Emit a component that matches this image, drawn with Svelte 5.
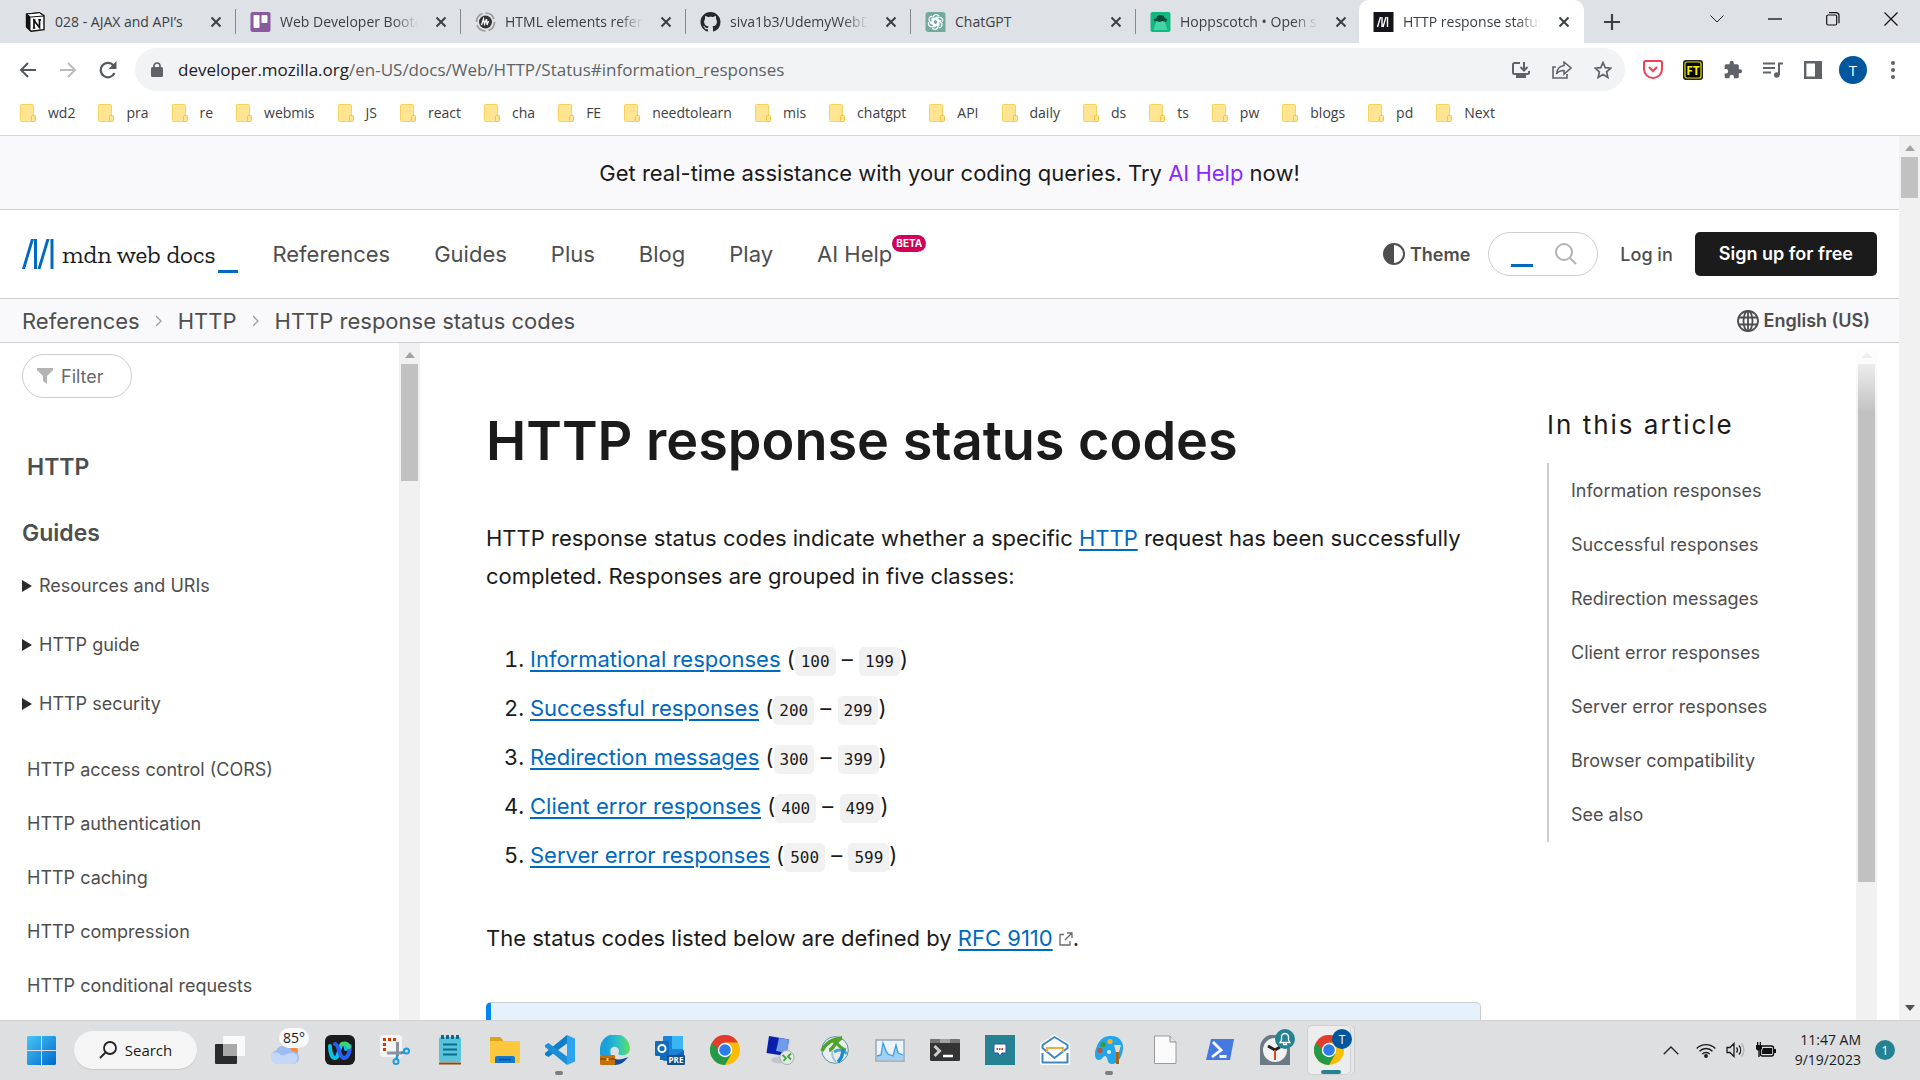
<script>
  const tabs = [
    { icon: 'notion', title: '028 - AJAX and API’s' },
    { icon: 'trello', title: 'Web Developer Bootcamp' },
    { icon: 'mdnring', title: 'HTML elements reference' },
    { icon: 'github', title: 'siva1b3/UdemyWebDev' },
    { icon: 'gpt', title: 'ChatGPT' },
    { icon: 'hopp', title: 'Hoppscotch • Open source' },
    { icon: 'mdn', title: 'HTTP response status codes', active: true }
  ];
  const bookmarks = ['wd2', 'pra', 're', 'webmis', 'JS', 'react', 'cha', 'FE', 'needtolearn', 'mis', 'chatgpt', 'API', 'daily', 'ds', 'ts', 'pw', 'blogs', 'pd', 'Next'];
  const menu = ['References', 'Guides', 'Plus', 'Blog', 'Play'];
  const groups = ['Resources and URIs', 'HTTP guide', 'HTTP security'];
  const pages = ['HTTP access control (CORS)', 'HTTP authentication', 'HTTP caching', 'HTTP compression', 'HTTP conditional requests'];
  const classes = [
    ['Informational responses', 100, 199],
    ['Successful responses', 200, 299],
    ['Redirection messages', 300, 399],
    ['Client error responses', 400, 499],
    ['Server error responses', 500, 599]
  ];
  const toc = ['Information responses', 'Successful responses', 'Redirection messages', 'Client error responses', 'Server error responses', 'Browser compatibility', 'See also'];
  const apps = ['Task view', 'Weather', 'Webex', 'Snipping Tool', 'Notepad', 'File Explorer', 'Visual Studio Code', 'Edge', 'Outlook', 'Chrome', 'Remote Desktop', 'AnyConnect', 'Performance Monitor', 'Terminal', 'Chat', 'Mail', 'Paint', 'Document', 'PowerShell', 'Clock', 'Chrome profile'];
  const running = ['Visual Studio Code', 'Paint'];
</script>

{#snippet cross()}
  <svg width="12" height="12" viewBox="0 0 12 12"><path d="M1.5 1.5l9 9M10.5 1.5l-9 9" stroke="#3c4043" stroke-width="2" fill="none" /></svg>
{/snippet}

{#snippet favicon(name)}
  <svg class="fav" width="21" height="20" viewBox="0 0 20 20">
    {#if name === 'notion'}
      <path d="M1 2.2L14 .8l4.5 2.8v14L5.500 19.300 1 15z" fill="#fff" stroke="#111" stroke-width="1.4" />
      <path d="M1 2l13-1.200L18.500 4 5 5z" fill="#fff" stroke="#111" />
      <path d="M5 5v14L1 15V2z" fill="#111" />
      <path d="M8.500 16V8.500l5.500 7V8M7.500 8.200h2.500M12.800 7.800h2.700M7.300 16h2.500" stroke="#111" stroke-width="1.700" fill="none" />
    {:else if name === 'trello'}
      <rect width="20" height="20" rx="2" fill="#8a5aa0" />
      <rect x="3" y="3" width="6" height="13" rx="1" fill="#fff" />
      <rect x="11" y="3" width="6" height="8" rx="1" fill="#fff" />
    {:else if name === 'mdnring'}
      <circle cx="10" cy="10" r="9" fill="none" stroke="#9b9b9b" stroke-width="1.700" stroke-dasharray="11 3" />
      <circle cx="10" cy="10" r="6.500" fill="#333" />
      <path d="M6 13l2-6 1 5 2-5 .5 6 1.500-4" stroke="#fff" stroke-width="1.300" fill="none" />
    {:else if name === 'github'}
      <path transform="scale(1.250)" fill="#24292e" d="M8 0C3.580 0 0 3.580 0 8c0 3.540 2.290 6.530 5.470 7.590.4.070.55-.17.55-.38 0-.19-.01-.82-.01-1.490-2.010.37-2.530-.49-2.690-.94-.09-.23-.48-.94-.82-1.130-.28-.15-.68-.52-.01-.53.63-.01 1.080.58 1.230.82.72 1.210 1.870.87 2.330.66.07-.52.28-.87.51-1.070-1.780-.2-3.640-.89-3.640-3.950 0-.87.31-1.590.82-2.150-.08-.2-.36-1.020.08-2.120 0 0 .67-.21 2.200.82.64-.18 1.320-.27 2-.27s1.360.09 2 .27c1.530-1.040 2.200-.82 2.200-.82.44 1.100.16 1.920.08 2.120.51.56.82 1.270.82 2.150 0 3.070-1.870 3.750-3.650 3.950.29.25.54.73.54 1.480 0 1.070-.01 1.930-.01 2.200 0 .21.15.46.55.38A8.010 8.010 0 0 0 16 8c0-4.420-3.580-8-8-8z" />
    {:else if name === 'gpt'}
      <path d="M3 0h14a3 3 0 0 1 3 3v17H3a3 3 0 0 1-3-3V3a3 3 0 0 1 3-3z" fill="#74aa9c" />
      <g fill="none" stroke="#fff" stroke-width="1.200">
        {#each [0, 60, 120, 180, 240, 300] as a}
          <path transform="rotate({a} 10 10)" d="M7.500 11.500V5.600a3.200 3.200 0 0 1 5.900-1.500M7.500 8.600l3.500-2 4.500 2.600" />
        {/each}
      </g>
    {:else if name === 'hopp'}
      <rect width="20" height="20" rx="2" fill="#10b981" />
      <path d="M6 9h8l3 9H3z" fill="#5fe0b4" opacity=".7" />
      <path d="M6 6a4 3 0 0 1 8 0l3 1.500-2 2.500-3-1-3 1-3-1-2 .5-1-2z" fill="#0b4b3a" />
    {:else}
      <rect width="20" height="20" fill="#15141a" />
      <path d="M4 15L7 5M8.500 15V5M9.500 15l3-10M14 15V5" stroke="#fff" stroke-width="1.400" fill="none" />
    {/if}
  </svg>
{/snippet}

{#snippet chromeLogo()}
  <circle cx="15" cy="15" r="15" fill="#fbbc04" />
  <path d="M2 7.500A15 15 0 0 0 15 30l6.500-11.300L15 15z" fill="#249a48" />
  <path d="M2 7.500A15 15 0 0 1 28 7.500H15L9 16z" fill="#e33b2e" />
  <circle cx="15" cy="15" r="7.200" fill="#fff" />
  <circle cx="15" cy="15" r="5.800" fill="#2b7de9" />
{/snippet}

{#snippet appIcon(name)}
  <svg width="30" height="30" viewBox="0 0 30 30">
    {#if name === 'Task view'}
      <rect y="9" width="22" height="20" rx="1" fill="#2b2b2b" />
      <rect x="8" y="1" width="22" height="20" rx="1" fill="#fff" opacity=".85" />
      <rect x="8" y="9" width="14" height="12" fill="#a9a9a9" />
    {:else if name === 'Weather'}
      <circle cx="21" cy="16" r="7" fill="#f58a3c" />
      <path d="M7 29a7 7 0 0 1-1-13.500A9 9 0 0 1 22 16a6.500 6.500 0 0 1 1 13z" fill="#9dbcf0" />
      <path d="M7 29a7 7 0 0 1-5-11c6-3 9 4 13 2s8-3 12 0a6.500 6.500 0 0 1-4 9z" fill="#c4d7f7" />
    {:else if name === 'Webex'}
      <rect width="30" height="30" rx="6" fill="#1b1b1b" />
      <path d="M5 11c0 7 2 12 5 12 4 0 4-14 8-14 2 0 3 2 3 5" fill="none" stroke="#0bc1e6" stroke-width="4" stroke-linecap="round" />
      <path d="M10 9c4 0 4 14 9 14 3 0 6-4 6-12" fill="none" stroke="#2b5cf5" stroke-width="4" stroke-linecap="round" />
      <path d="M17 9c2-1 6-1 7 3" fill="none" stroke="#3ed66b" stroke-width="4" stroke-linecap="round" />
    {:else if name === 'Snipping Tool'}
      <rect width="22" height="22" rx="3" fill="#f5f5f7" />
      <path d="M4.500 16V4.500H17" fill="none" stroke="#d83b01" stroke-width="3" stroke-dasharray="3 2" />
      <path d="M17.500 7v14M7 18h15" stroke="#8b929b" stroke-width="3" />
      <path d="M17.500 20l-1 4M21 18l3-1" stroke="#1a9be0" stroke-width="2.500" />
      <circle cx="26.500" cy="16" r="2.500" fill="none" stroke="#1a9be0" stroke-width="2" />
      <circle cx="16" cy="26.500" r="2.500" fill="none" stroke="#1a9be0" stroke-width="2" />
    {:else if name === 'Notepad'}
      <rect x="4" y="2" width="22" height="25" rx="2" fill="#58c4dc" />
      <path d="M4 28.500h22" stroke="#8a4a12" stroke-width="2" />
      <path d="M8 9.500h14M8 14.500h14M8 19.500h14" stroke="#0c6a8c" stroke-width="2" />
      <path d="M7.500 0v4M12.500 0v4M17.500 0v4M22.500 0v4" stroke="#0c6a8c" stroke-width="3" />
    {:else if name === 'File Explorer'}
      <path d="M0 3q0-1 1-1h9l3 3v6H0z" fill="#e0a21a" />
      <rect y="6" width="30" height="22" rx="1" fill="#fdc83e" />
      <path d="M5 28v-5q0-2 2-2h16q2 0 2 2v5z" fill="#1579cf" />
      <path d="M9 24.500h12" stroke="#0b4f94" stroke-width="1.500" />
    {:else if name === 'Visual Studio Code'}
      <path d="M22 0v8.500L3.500 22 0 20v-2z" fill="#0f7fc6" />
      <path d="M22 30v-8.500L3.500 8 0 10v2z" fill="#1c8ed8" />
      <path d="M22 0l8 3.500v23L22 30z" fill="#2ba5f2" />
    {:else if name === 'Edge'}
      <defs><linearGradient id="edge"><stop offset=".2" stop-color="#1a9fd9" /><stop offset=".6" stop-color="#2cc3c4" /><stop offset="1" stop-color="#62df5a" /></linearGradient></defs>
      <path d="M11 20c2 5 9 6 17 2-3 5-8 8-13 8-5 0-6-6-4-10z" fill="#114c9c" />
      <path d="M0 20v-5A15 15 0 0 1 30 13c0 6-5 8-10 7-3-1-1-2-1-4 0-3-3-5-6-4-3 1-3 5-2 8z" fill="url(#edge)" />
      <rect y="20" width="15" height="10" rx="1" fill="#c46f0b" />
      <path d="M0 24h15" stroke="#6e3a05" stroke-width="1" /><rect x="6.500" y="23" width="2" height="3" fill="#fcd34d" />
    {:else if name === 'Outlook'}
      <rect x="8" y="1" width="20" height="25" rx="1" fill="#1a83d8" />
      <rect x="17" y="1" width="11" height="13" fill="#3bb4f2" />
      <path d="M5 15l12 8 12-8v10H5z" fill="#1568b8" />
      <rect y="6" width="14" height="15" rx="1" fill="#0f6cbd" />
      <circle cx="7" cy="13.500" r="3.600" fill="none" stroke="#fff" stroke-width="2" />
      <rect x="12" y="20" width="18" height="10" rx="1" fill="#174f86" />
      <text x="21" y="28" fill="#fff" font-size="8" font-weight="700" text-anchor="middle">PRE</text>
    {:else if name === 'Remote Desktop'}
      <ellipse cx="14" cy="25" rx="8" ry="3.500" fill="#c3c7cc" />
      <path d="M4 0l22 4-3 19L1 19z" fill="#d5d9e0" />
      <path d="M4 1l20 3.500L21 21 1.500 18z" fill="#0a1fae" />
      <path d="M14 3l10 1.500L22 18l-11-2z" fill="#6f9be8" />
      <circle cx="22" cy="22.500" r="7" fill="#e5e8e5" stroke="#a9aeb2" />
      <path d="M17.500 20l3.500 3-2.500 3M26 18.500l-3 3 3 3" stroke="#3aa935" stroke-width="1.800" fill="none" />
    {:else if name === 'AnyConnect'}
      <circle cx="15" cy="15" r="13.300" fill="#e6eeee" stroke="#5b93ab" />
      <path d="M2 16C5 9 11 4 22 3c-7 2-8 12-13 12" fill="none" stroke="#51a32a" stroke-width="3.500" />
      <path d="M13 6c5 2 7 8 13 9" fill="none" stroke="#51a32a" stroke-width="3" />
      <path d="M14 17c6-4 11-1 13 2" fill="none" stroke="#46a7c4" stroke-width="3" />
      <path d="M23 14c0 5-1 9-5 13" fill="none" stroke="#1a88d4" stroke-width="3.500" />
      <path d="M12 16c0 5 1 8 4 11" fill="none" stroke="#a8c5cb" stroke-width="2" />
    {:else if name === 'Performance Monitor'}
      <rect x="1" y="5" width="28" height="21" fill="#edf3f8" stroke="#98a9b8" stroke-width="1.500" />
      <path d="M2 21l4-1 3-11 4 10 5 2 3-11 3 8 4 2v5H2z" fill="#9fd0f5" />
      <path d="M2 21l4-1 2-12 3 8 2 3 5 2 3-11 2 8 5 2" fill="none" stroke="#3d9ee0" stroke-width="1.300" />
    {:else if name === 'Terminal'}
      <rect y="4" width="30" height="22" rx="1.500" fill="#343434" />
      <path d="M1 4h9v4H0V5zM20 4h9l1 1v3H20z" fill="#757575" /><path d="M10 4h10v4H10z" fill="#a3a3a3" />
      <path d="M4.500 11l5 5-5 5" fill="none" stroke="#ccc" stroke-width="3" /><path d="M13 21h10" stroke="#fff" stroke-width="2.500" />
    {:else if name === 'Chat'}
      <rect width="30" height="30" fill="#258292" />
      <path d="M9 9h12v9h-4l-2 3-2-3H9z" fill="#fff" stroke="#2456a0" />
      <path d="M11.500 14h7" stroke="#d33" stroke-width="2" stroke-dasharray="1.500 1" />
    {:else if name === 'Mail'}
      <path d="M2 10L14.500 2 28 10v18H2z" fill="#fff" stroke="#fff" stroke-width="4" stroke-linejoin="round" />
      <path d="M2.500 18v9.500h25V18M2.500 13v-3L14.500 2 27.500 10v3l-13 10z" fill="none" stroke="#4186bf" stroke-width="2" stroke-linejoin="round" />
      <path d="M7 17v-4h16v4" fill="none" stroke="#f0ad3d" stroke-width="2" />
    {:else if name === 'Paint'}
      <path d="M15 1c8-1 14 5 13 13-1 9-6 15-11 15-6 0-3-7-7-8-2 0-3 4-6 4-5 0-5-8-2-14C4 5 9 1 15 1z" fill="#22a5ea" />
      <circle cx="5" cy="15.500" r="2.600" fill="#c7512a" /><circle cx="8" cy="9.500" r="2.600" fill="#3a9b35" /><circle cx="15" cy="6.500" r="2.600" fill="#f4b71b" /><circle cx="14" cy="17" r="2" fill="#dff2fc" />
      <path d="M22.500 15v14" stroke="#a5641c" stroke-width="3" /><path d="M19 10h7l-2 7h-3z" fill="#efd9b8" />
    {:else if name === 'Document'}
      <path d="M4.500 1H20l6 6v21.500H4.500z" fill="#fafafa" stroke="#9b9b9b" /><path d="M20 1v6h6" fill="#e5e5e5" stroke="#8d8d8d" />
    {:else if name === 'PowerShell'}
      <path d="M6 4h23l-4 21H1z" fill="#4479e0" />
      <path d="M8 7l8 8-9 7M14.500 21.500h7" fill="none" stroke="#fff" stroke-width="2.800" />
    {:else if name === 'Clock'}
      <path d="M0 30V13A15 14 0 0 1 30 13v17z" fill="#6c7a86" />
      <circle cx="15" cy="15" r="12" fill="#f0f1f2" />
      <path d="M8 11l7 4 5-3" fill="none" stroke="#222" stroke-width="3" /><path d="M15 15v10" stroke="#e04a16" stroke-width="2" />
    {:else}
      {@render chromeLogo()}
    {/if}
  </svg>
{/snippet}

{#snippet track(kind)}
  <div class="track {kind}" aria-hidden="true">
    <svg width="10" height="6" viewBox="0 0 10 6"><path d="M0 6l5-6 5 6z" fill="#a3a3a3" /></svg>
    <div class="thumb"></div>
    {#if kind === 'outer'}
      <svg class="down" width="10" height="6" viewBox="0 0 10 6"><path d="M0 0l5 6 5-6z" fill="#505050" /></svg>
    {/if}
  </div>
{/snippet}

<div class="desktop">
  <header class="tabs">
    {#each tabs as t}
      <div class="tab" class:active={t.active}>
        {@render favicon(t.icon)}
        <span class="title">{t.title}</span>
        <button class="plain close" aria-label="Close tab">{@render cross()}</button>
      </div>
    {/each}
    <button class="plain newtab" aria-label="New tab"><svg width="16" height="16" viewBox="0 0 16 16"><path d="M8 0v16M0 8h16" stroke="#3c4043" stroke-width="2.200" /></svg></button>
    <div class="winctl">
      <button class="plain" aria-label="Search tabs"><svg width="14" height="8" viewBox="0 0 14 8"><path d="M.5.5L7 7 13.500.5" fill="none" stroke="#222" /></svg></button>
      <button class="plain" aria-label="Minimize"><svg width="14" height="14" viewBox="0 0 14 14"><path d="M0 7h14" stroke="#111" stroke-width="1.300" /></svg></button>
      <button class="plain" aria-label="Restore"><svg width="14" height="14" viewBox="0 0 14 14"><rect x=".7" y="3" width="10" height="10" rx="1.500" fill="none" stroke="#111" stroke-width="1.200" /><path d="M3 .7h7a3 3 0 0 1 3 3v7.500" fill="none" stroke="#111" stroke-width="1.200" /></svg></button>
      <button class="plain" aria-label="Close window"><svg width="14" height="14" viewBox="0 0 14 14"><path d="M.5.5l13 13M13.500.5l-13 13" stroke="#111" stroke-width="1.200" /></svg></button>
    </div>
  </header>

  <div class="toolbar">
    <button class="plain tool" aria-label="Back"><svg width="18" height="16" viewBox="0 0 18 16"><path d="M9 1L2 8l7 7M2 8h15" fill="none" stroke="#55585c" stroke-width="2" /></svg></button>
    <button class="plain tool" aria-label="Forward"><svg width="18" height="16" viewBox="0 0 18 16"><path d="M9 1l7 7-7 7M16 8H1" fill="none" stroke="#babcbe" stroke-width="2" /></svg></button>
    <button class="plain tool" aria-label="Reload"><svg width="18" height="18" viewBox="0 0 18 18"><path d="M15.500 12A7.200 7.200 0 1 1 14.500 4.500" fill="none" stroke="#55585c" stroke-width="2.200" /><path d="M17.500 0v8h-8z" fill="#55585c" /></svg></button>
    <div class="omnibox">
      <svg width="12" height="15" viewBox="0 0 12 15"><path d="M3 6V4a3 3 0 0 1 6 0v2" fill="none" stroke="#5f6368" stroke-width="1.700" /><rect y="5" width="12" height="10" rx="1.500" fill="#5f6368" /></svg>
      <div class="url"><b>developer.mozilla.org</b>/en-US/docs/Web/HTTP/Status#information_responses</div>
      <button class="plain" aria-label="Install"><svg width="18" height="18" viewBox="0 0 18 18"><path d="M8 2H2.500Q1 2 1 3.500v8Q1 13 2.500 13h13q1.500 0 1.500-1.500V10" fill="none" stroke="#5f6368" stroke-width="2" /><path d="M12 1v8M8.500 6l3.500 3.500L15.500 6" fill="none" stroke="#5f6368" stroke-width="2" /><path d="M4 13h10v4H4z" fill="#5f6368" /></svg></button>
      <button class="plain" aria-label="Share"><svg width="20" height="18" viewBox="0 0 20 18"><path d="M4 6H1v11h14v-4" fill="none" stroke="#5f6368" stroke-width="1.600" /><path d="M12 1l7 6-7 6V9.500c-4 0-6 1-7.500 3.500C5 8 8 5 12 4.500z" fill="none" stroke="#5f6368" stroke-width="1.500" /></svg></button>
      <button class="plain" aria-label="Bookmark"><svg width="18" height="18" viewBox="0 0 18 18"><path d="M9 1.500l2.200 5.200 5.600.5-4.200 3.700 1.200 5.500L9 13.500l-4.800 2.900 1.200-5.500L1.200 7.200l5.600-.5z" fill="none" stroke="#5f6368" stroke-width="1.700" /></svg></button>
    </div>
    <button class="plain ext" aria-label="Pocket"><svg width="20" height="19" viewBox="0 0 20 19"><path d="M2.500 1h15Q19 1 19 2.500V9a9 9 0 0 1-18 0V2.500Q1 1 2.500 1z" fill="none" stroke="#ef4056" stroke-width="2" /><path d="M6 7l4 4 4-4" fill="none" stroke="#ef4056" stroke-width="2.200" /></svg></button>
    <button class="plain ext" aria-label="FT"><svg width="20" height="20" viewBox="0 0 20 20"><rect width="20" height="20" rx="3" fill="#222" /><rect x="2" y="2" width="16" height="16" rx="2" fill="#000" stroke="#e6e000" stroke-width="1.200" /><text x="10" y="14.500" font-size="12" font-weight="700" fill="#f4ee00" text-anchor="middle">FT</text></svg></button>
    <button class="plain ext" aria-label="Extensions"><svg width="20" height="20" viewBox="0 0 24 24"><path fill="#5f6368" d="M20.500 11H19V7c0-1.100-.9-2-2-2h-4V3.500a2.500 2.500 0 0 0-5 0V5H4c-1.100 0-2 .9-2 2v3.800h1.500a2.700 2.700 0 0 1 0 5.400H2V20c0 1.100.9 2 2 2h3.800v-1.500a2.700 2.700 0 0 1 5.400 0V22H17c1.100 0 2-.9 2-2v-4h1.500a2.500 2.500 0 0 0 0-5z" /></svg></button>
    <button class="plain ext" aria-label="Media"><svg width="20" height="16" viewBox="0 0 20 16"><path d="M0 1.500h12M0 6h12M0 10.500h8" stroke="#5f6368" stroke-width="2" /><path d="M16 13V1.500h4" fill="none" stroke="#5f6368" stroke-width="2" /><circle cx="13.800" cy="13" r="2.800" fill="#5f6368" /></svg></button>
    <button class="plain ext" aria-label="Side panel"><svg width="18" height="18" viewBox="0 0 18 18"><path d="M1.200 1.200h15.600v15.600H1.200z" fill="none" stroke="#5f6368" stroke-width="2.400" /><path d="M11 1h6v16h-6z" fill="#5f6368" /></svg></button>
    <button class="plain avatar">T</button>
    <button class="plain dots" aria-label="Menu"><svg width="4" height="18" viewBox="0 0 4 18"><circle cx="2" cy="2" r="2" fill="#5f6368" /><circle cx="2" cy="9" r="2" fill="#5f6368" /><circle cx="2" cy="16" r="2" fill="#5f6368" /></svg></button>
  </div>

  <nav class="bookmarks" aria-label="Bookmarks">
    {#each bookmarks as b}
      <a href="#{b}">
        <svg width="16" height="18" viewBox="0 0 16 18"><rect x=".5" y=".5" width="13" height="17" rx="1" fill="#ffe591" stroke="#f6d25c" /><rect x="11.500" y="11.500" width="4" height="6" rx="1" fill="#ffe591" stroke="#f0c53f" /></svg>
        {b}
      </a>
    {/each}
  </nav>

  <div class="viewport">
    <div class="page">
      <p class="banner"><span>Get real-time assistance with your coding queries. Try <a href="#ai">AI Help</a> now!</span></p>
      <div class="nav">
        <a class="logo" href="#home">
          <svg width="32" height="30" viewBox="0 0 32 30"><path d="M9 0h3L3 30H0zM12 0h3v30h-3zM24.500 0h3l-9 30h-3zM28.500 0h3v30h-3z" fill="#0069c2" /></svg>
          <span>mdn web docs</span><i></i>
        </a>
        <nav class="menu">
          {#each menu as m}<a href="#{m}">{m}</a>{/each}
          <a href="#aihelp" class="ai">AI Help<sup>BETA</sup></a>
        </nav>
        <button class="plain theme"><svg width="22" height="22" viewBox="0 0 22 22"><circle cx="11" cy="11" r="10" fill="none" stroke="#4e4e4e" stroke-width="2" /><path d="M11 1a10 10 0 0 0 0 20z" fill="#4e4e4e" /></svg>Theme</button>
        <form class="search">
          <input aria-label="Search" />
          <i></i>
          <button class="plain" type="button" aria-label="Search"><svg width="22" height="22" viewBox="0 0 22 22"><circle cx="9" cy="9" r="8" fill="none" stroke="#b3b3b3" stroke-width="2" /><path d="M14.500 14.500L21 21" stroke="#b3b3b3" stroke-width="2" /></svg></button>
        </form>
        <a class="login" href="#login">Log in</a>
        <a class="signup" href="#signup">Sign up for free</a>
      </div>
      <div class="crumbs">
        <a href="#References">References</a>
        <svg width="6" height="12" viewBox="0 0 6 12"><path d="M0 1l5 5-5 5" fill="none" stroke="#9e9e9e" stroke-width="1.300" /></svg>
        <a href="#http">HTTP</a>
        <svg width="6" height="12" viewBox="0 0 6 12"><path d="M0 1l5 5-5 5" fill="none" stroke="#9e9e9e" stroke-width="1.300" /></svg>
        <a href="#status">HTTP response status codes</a>
        <button class="plain lang"><svg width="22" height="22" viewBox="0 0 22 22"><g fill="none" stroke="#4e4e4e" stroke-width="1.800"><circle cx="11" cy="11" r="10" /><ellipse cx="11" cy="11" rx="4.500" ry="10" /><path d="M11 1v20M2 7.500h18M2 14.500h18" /></g></svg>English (US)</button>
      </div>
      <div class="content">
        <aside class="side">
          <label class="filter">
            <svg width="16" height="16" viewBox="0 0 16 16"><path d="M0 0h16v2l-6 6v8l-4-3V8L0 2z" fill="#b3b3b3" /></svg>
            <input placeholder="Filter" aria-label="Filter" />
          </label>
          <a class="root" href="#http">HTTP</a>
          <h2>Guides</h2>
          {#each groups as g}
            <details><summary><svg width="10" height="12" viewBox="0 0 10 12"><path d="M0 0l10 6-10 6z" fill="#2b2b2b" /></svg>{g}</summary></details>
          {/each}
          <ul>
            {#each pages as p}<li><a href="#{p}">{p}</a></li>{/each}
          </ul>
        </aside>
        {@render track('left')}
        <main>
          <h1>HTTP response status codes</h1>
          <p>HTTP response status codes indicate whether a specific <a href="#http">HTTP</a> request has been successfully completed. Responses are grouped in five classes:</p>
          <ol>
            {#each classes as [label, from, to]}
              <li><a href="#{from}">{label}</a> (<code>{from}</code> – <code>{to}</code>)</li>
            {/each}
          </ol>
          <p>The status codes listed below are defined by <a href="#rfc">RFC 9110</a> <svg class="out" width="14" height="14" viewBox="0 0 14 14"><path d="M5 2.500H1v10.500h10V9M8 1h5v5M13 1L6 8" fill="none" stroke="#696969" stroke-width="1.300" /></svg>.</p>
          <div class="note"></div>
        </main>
        <nav class="toc">
          <h2>In this article</h2>
          <ul>
            {#each toc as t}<li><a href="#{t}">{t}</a></li>{/each}
          </ul>
        </nav>
        {@render track('right')}
      </div>
    </div>
    {@render track('outer')}
  </div>

  <footer class="taskbar">
    <button class="plain start" aria-label="Start"><svg width="29" height="29" viewBox="0 0 29 29"><defs><linearGradient id="win" x1="0" y1="0" x2="1" y2="1"><stop offset="0" stop-color="#48c5f7" /><stop offset="1" stop-color="#0069cc" /></linearGradient></defs><path d="M1 0h13v14H0V1zM15 0h13l1 1v13H15zM0 15h14v14H1l-1-1zM15 15h14v13l-1 1H15z" fill="url(#win)" /></svg></button>
    <button class="plain find"><svg width="18" height="18" viewBox="0 0 18 18"><circle cx="11" cy="7" r="6" fill="none" stroke="#222" stroke-width="1.800" /><path d="M7 11l-6 6" stroke="#222" stroke-width="1.800" /></svg>Search</button>
    <div class="apps">
      {#each apps as a}
        <button class="plain app" class:open={running.includes(a)} class:current={a === 'Chrome profile'} aria-label={a}>
          {@render appIcon(a)}
          {#if a === 'Weather'}<span class="temp">85°</span>{/if}
          {#if a === 'Clock'}<span class="pin bell"><svg width="12" height="14" viewBox="0 0 12 14"><path d="M1 10.500h10L9.500 8V5a3.500 3.500 0 0 0-7 0v3zM4.500 11v1.500h3V11" fill="none" stroke="#fff" stroke-width="1.300" /></svg></span>{/if}
          {#if a === 'Chrome profile'}<span class="pin">T</span>{/if}
        </button>
      {/each}
    </div>
    <div class="tray">
      <button class="plain" aria-label="Show hidden icons"><svg width="16" height="9" viewBox="0 0 16 9"><path d="M.7 8.300L8 1l7.300 7.300" fill="none" stroke="#222" stroke-width="1.300" /></svg></button>
      <button class="plain" aria-label="Network"><svg width="20" height="15" viewBox="0 0 20 15"><g fill="none" stroke="#1b1b1b" stroke-width="1.400"><path d="M.7 5.500a13 13 0 0 1 18.600 0M3.500 8.300a9 9 0 0 1 13 0M6.300 11a5.200 5.200 0 0 1 7.400 0" /></g><circle cx="10" cy="13" r="1.900" fill="#1b1b1b" /></svg></button>
      <button class="plain" aria-label="Volume"><svg width="20" height="16" viewBox="0 0 20 16"><path d="M1 5.500h3L8 1.500v13l-4-4H1zM10.500 5.500a4 4 0 0 1 0 5M13 3.500a7 7 0 0 1 0 9" fill="none" stroke="#1b1b1b" stroke-width="1.300" /><path d="M15.500 1.500a10 10 0 0 1 0 13" fill="none" stroke="#b3b3b3" stroke-width="1.300" /></svg></button>
      <button class="plain" aria-label="Battery"><svg width="20" height="16" viewBox="0 0 20 16"><rect x="4.500" y="4" width="13" height="10" rx="2" fill="none" stroke="#111" stroke-width="1.400" /><path d="M7 6h9v6H6V9zM18 7h2v4h-2zM0 3h6v4L4.500 8.500h-3L0 7zM1 0h1.300v3H1zM3.700 0H5v3H3.700zM2.300 8h1.400v7H2.300z" fill="#111" /></svg></button>
      <time>11:47 AM<br />9/19/2023</time>
      <span class="count">1</span>
    </div>
  </footer>
</div>

<style>
  :global(body) { margin: 0; }
  .desktop { display: flex; flex-direction: column; height: 100vh; overflow: hidden; background: #fff; font-family: "Segoe UI", "Open Sans", sans-serif; color: #1b1b1b; }
  .desktop :global(*) { box-sizing: border-box; }
  svg { flex: none; display: block; }
  a { color: inherit; text-decoration: none; }
  h1, h2, p, ul, ol { margin: 0; padding: 0; }
  ul { list-style: none; }
  .plain { border: 0; padding: 0; background: none; font: inherit; color: inherit; display: flex; align-items: center; justify-content: center; }

  .tabs { display: flex; height: 43px; flex: none; padding-left: 11px; background: #dee1e6; }
  .tab { display: flex; align-items: center; width: 225px; padding: 0 14px; position: relative; }
  .tab::after { content: ""; position: absolute; right: 0; top: 9px; width: 1px; height: 25px; background: #85888c; }
  .tab:nth-child(6)::after, .tab.active::after { display: none; }
  .tab.active { background: #fff; border-radius: 10px 10px 0 0; margin-left: -2px; }
  .title { flex: 1; margin: 0 17px 0 9px; font-size: 14px; line-height: 20px; color: #3c4043; white-space: nowrap; overflow: hidden; mask-image: linear-gradient(90deg, #000 82%, transparent); }
  .tab:first-child .title, .tab:nth-child(5) .title { mask-image: none; }
  .tab:first-child .title { margin-right: 12px; }
  .newtab { width: 56px; }
  .winctl { display: flex; margin-left: auto; height: 38px; }
  .winctl button { width: 58px; }

  .toolbar { display: flex; align-items: center; flex: none; height: 53px; padding: 0 25px 0 8px; }
  .tool { width: 40px; }
  .omnibox { flex: 1; display: flex; align-items: center; gap: 22px; height: 43px; margin: 0 8px 0 7px; padding: 0 13px 0 16px; border-radius: 22px; background: #f1f3f4; }
  .url { flex: 1; margin-left: -7px; font-size: 17px; color: #5f6368; white-space: nowrap; }
  .url b { font-weight: 400; color: #202124; }
  .ext { width: 40px; }
  .avatar { width: 28px; height: 28px; margin: 0 24px 0 6px; border-radius: 50%; background: #00579e; color: #fff; font-size: 15px; }
  .bookmarks { display: flex; flex: none; gap: 23px; height: 40px; padding: 0 20px 6px; align-items: center; border-bottom: 1px solid #d5d6d8; }
  .bookmarks a { display: flex; gap: 12px; align-items: center; font-size: 14px; color: #3c4043; }

  .viewport { flex: 1; min-height: 0; display: flex; }
  .page { flex: 1; min-width: 0; display: flex; flex-direction: column; font-family: Inter, sans-serif; font-size: 22px; }
  .banner { display: flex; align-items: center; justify-content: center; flex: none; height: 74px; background: #f9f9fb; border-bottom: 1px solid #cdcdcd; }
  .banner a { color: #872bff; }
  .nav { display: flex; align-items: center; flex: none; height: 89px; padding: 0 22px; border-bottom: 1px solid #cdcdcd; color: #4e4e4e; }
  .logo { display: flex; align-items: center; color: #1b1b1b; font-family: "Zilla Slab", "DejaVu Serif", serif; font-size: 25px; white-space: nowrap; }
  .logo span { margin: 0 3px 0 8px; }
  .logo i { width: 20px; height: 3px; margin-top: 34px; background: #0069c2; }
  .menu { display: flex; gap: 44px; margin: 0 auto 0 34px; }
  .ai { position: relative; }
  .ai sup { position: absolute; left: 100%; top: -6px; padding: 0 4px; border-radius: 9px; background: #d30058; color: #fff; font-size: 10px; line-height: 17px; font-weight: 700; }
  .theme, .lang { gap: 5px; font-size: 18px; font-weight: 600; }
  .search { position: relative; display: flex; align-items: center; width: 110px; height: 44px; margin: 0 22px 0 18px; padding: 0 20px 0 12px; border: 1px solid #cdcdcd; border-radius: 22px; }
  .search input { flex: 1; min-width: 0; border: 0; outline: 0; background: none; }
  .search i { position: absolute; left: 22px; top: 31px; width: 22px; height: 3px; background: #0069c2; }
  .login { font-size: 18px; font-weight: 500; }
  .signup { margin-left: 22px; padding: 0 24px; line-height: 44px; border-radius: 5px; background: #1b1b1b; color: #fff; font-size: 18px; font-weight: 600; }
  .crumbs { display: flex; align-items: center; flex: none; gap: 16px; height: 44px; padding: 0 29px 0 22px; background: #f9f9fb; border-bottom: 1px solid #cdcdcd; color: #4e4e4e; }
  .lang { margin-left: auto; }

  .content { flex: 1; min-height: 0; display: flex; padding-right: 22px; overflow: hidden; }
  .side { width: 399px; flex: none; padding: 11px 22px 0; overflow: hidden; font-size: 18px; color: #4e4e4e; }
  .filter { display: flex; align-items: center; gap: 8px; width: 110px; height: 44px; padding: 0 14px; border: 1px solid #cdcdcd; border-radius: 22px; }
  .filter input { width: 100%; min-width: 0; padding: 0; border: 0; outline: 0; background: none; font: inherit; }
  .filter input::placeholder { color: #696969; opacity: 1; }
  .root { display: block; margin: 55px 0 38px 5px; font-size: 23px; line-height: 28px; font-weight: 600; }
  .side h2 { margin-bottom: 9px; font-size: 23px; line-height: 28px; font-weight: 600; }
  summary { display: flex; align-items: center; gap: 7px; height: 59px; }
  .side ul { padding: 10px 0 0 5px; }
  .side li { line-height: 54px; white-space: nowrap; }

  .track { flex: none; width: 21px; padding: 9px 2px 12px; background: #f1f1f1; display: flex; flex-direction: column; align-items: center; }
  .thumb { width: 100%; height: 117px; margin-top: 6px; background: #c1c1c1; }
  .outer .thumb { height: 41px; }
  .down { margin-top: auto; margin-bottom: -3px; }
  .right .thumb { height: 518px; }
  .right { mask-image: linear-gradient(rgba(0, 0, 0, 0), #000 70px); }

  main { flex: 1; min-width: 0; padding: 65px 66px 0; line-height: 38px; overflow: hidden; }
  h1 { margin-bottom: 45px; font-size: 54px; line-height: 66px; font-weight: 600; white-space: nowrap; }
  main p, ol { margin-bottom: 45px; }
  main a { color: #0069c2; text-decoration: underline; text-decoration-thickness: 2px; text-underline-offset: 3px; }
  ol { padding-left: 44px; }
  ol li + li { margin-top: 11px; }
  code { padding: 5px 6px; border-radius: 5px; background: #f2f1f1; font-family: "DejaVu Sans Mono", monospace; font-size: 16px; line-height: 20px; }
  .out { display: inline; }
  .note { height: 60px; border: 1px solid #cdcdcd; border-left: 5px solid #0085f2; border-radius: 5px; background: #e5f2fd; }
  .toc { flex: none; width: 309px; padding-top: 67px; }
  .toc h2 { margin-bottom: 23px; font-size: 26px; line-height: 30px; font-weight: 400; letter-spacing: 2px; }
  .toc ul { padding: 1px 0 0 22px; border-left: 2px solid #cdcdcd; }
  .toc li { font-size: 18px; line-height: 54px; color: #4e4e4e; }

  .taskbar { display: flex; align-items: center; flex: none; height: 60px; padding: 0 25px 0 27px; background: #dddfe0; box-shadow: inset 0 1px #cfd0d1; }
  .find { gap: 8px; width: 123px; height: 38px; margin: 0 5px 0 18px; border-radius: 19px; background: #f5f5f5; font-size: 15px; box-shadow: 0 1px 1px #c8c8c8; }
  .apps { display: flex; }
  .app { position: relative; width: 55px; height: 50px; }
  .open::after, .current::after { content: ""; position: absolute; bottom: 0; left: 23px; width: 8px; height: 4px; border-radius: 2px; background: #7d7d7d; }
  .current::after { left: 13px; width: 20px; background: #258292; }
  .current { width: 44px; margin-left: 5px; border: 1px solid #cfcfcf; border-radius: 5px; background: #ededee; box-shadow: 3px 0 0 #e6e7e8, 4px 0 0 #cbcbcb; }
  .temp { position: absolute; left: 22px; top: 3px; width: 30px; line-height: 20px; border-radius: 10px; background: #fafafa; font-size: 14px; }
  .pin { position: absolute; left: 24px; top: 3px; display: flex; align-items: center; justify-content: center; width: 20px; height: 20px; border-radius: 50%; background: #00579e; color: #fff; font-size: 12px; }
  .bell { left: 28px; top: 4px; background: #258292; }
  .tray { display: flex; align-items: center; gap: 10px; margin-left: auto; }
  .tray button:first-child { margin-right: 7px; }
  time { margin: 0 4px 0 9px; text-align: right; font-size: 14px; line-height: 20px; }
  .count { width: 20px; line-height: 20px; border-radius: 50%; background: #258292; color: #fff; font-size: 13px; text-align: center; }
</style>
